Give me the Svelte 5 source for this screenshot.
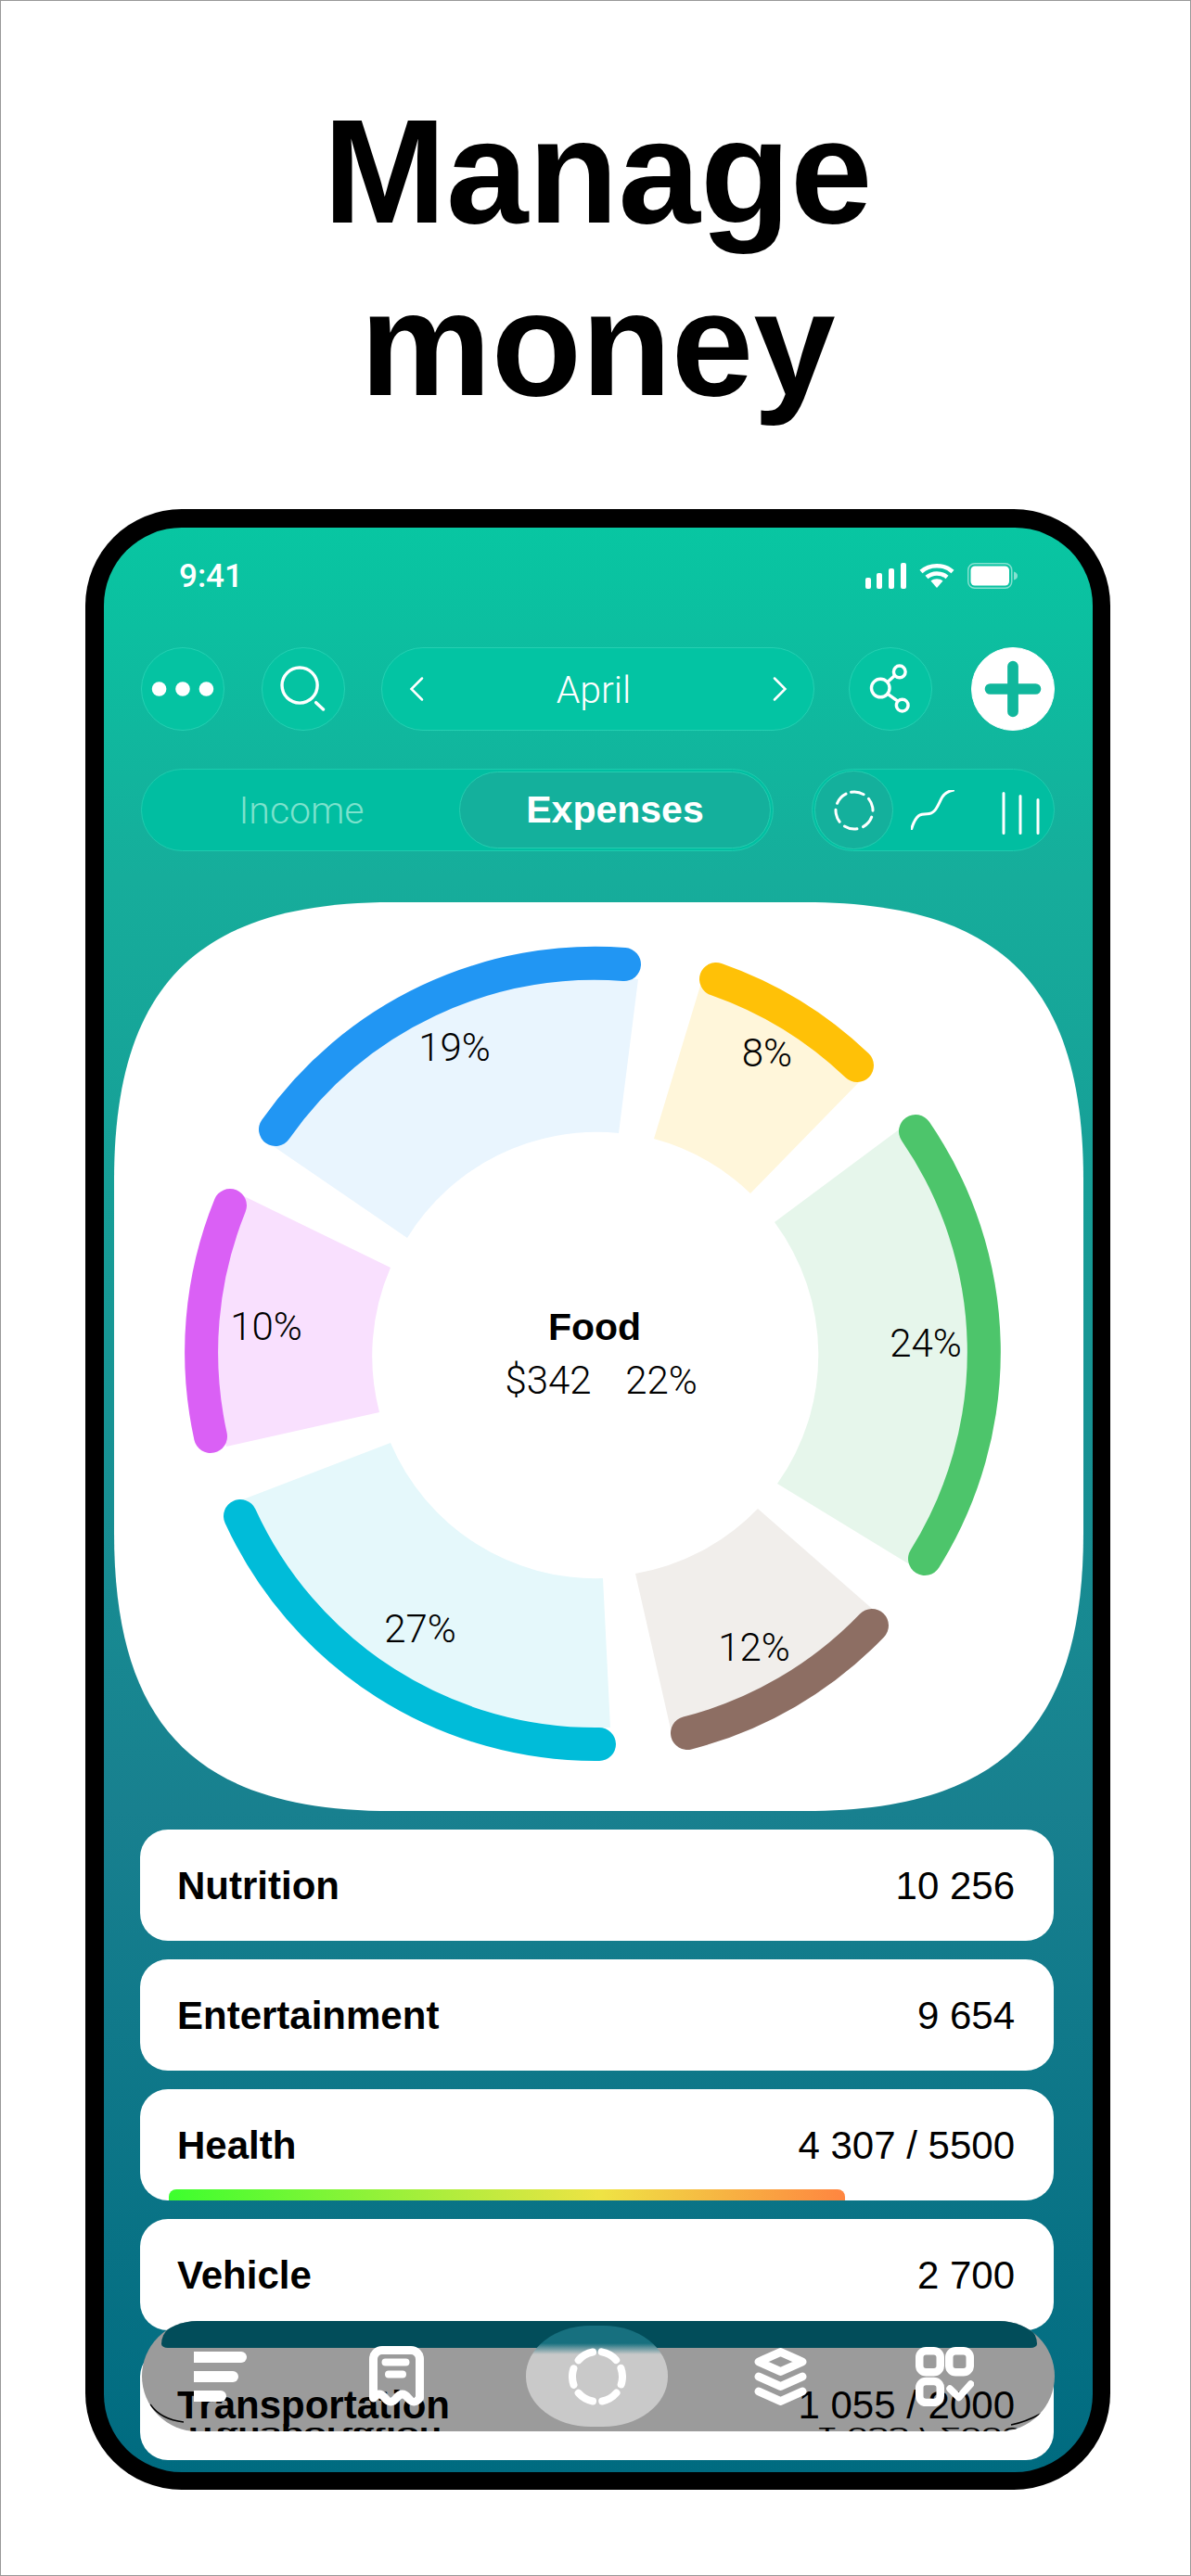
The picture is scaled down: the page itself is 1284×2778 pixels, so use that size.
<script lang="ts">
	const R = 421;
	const r = 240;
	// coordinates are page pixels, the svg viewBox is the card's box on the page
	const slices = [
		{ color: '#2196f3', tint: '#e9f5fe', arc: [297, 1217, 673, 1039], w: [293, 1234, 688, 1055, 667, 1221, 439, 1334], pct: '19%', tx: 490, ty: 1143 },
		{ color: '#ffc107', tint: '#fff6da', arc: [772, 1055, 924, 1148], w: [755, 1062, 928, 1164, 809, 1286, 705, 1227], pct: '8%', tx: 827, ty: 1149 },
		{ color: '#4dc56b', tint: '#e6f6eb', arc: [987, 1219, 997, 1680], w: [972, 1215, 982, 1687, 838, 1599, 835, 1317], pct: '24%', tx: 998, ty: 1462 },
		{ color: '#8d6e63', tint: '#f1eeeb', arc: [940, 1752, 741, 1868], w: [945, 1738, 724, 1868, 685, 1696, 817, 1626], pct: '12%', tx: 813, ty: 1790 },
		{ color: '#00bcd9', tint: '#e5f8fb', arc: [646, 1880, 259, 1634], w: [658, 1862, 262, 1616, 421, 1555, 650, 1701], pct: '27%', tx: 453, ty: 1770 },
		{ color: '#da60f5', tint: '#f9e0fe', arc: [227, 1548, 248, 1299], w: [244, 1559, 263, 1289, 421, 1366, 409, 1522], pct: '10%', tx: 287, ty: 1444 }
	];

	const arcPath = (a: number[]) => `M${a[0]} ${a[1]}A${R} ${R} 0 0 1 ${a[2]} ${a[3]}`;
	const wedgePath = (w: number[]) =>
		`M${w[0]} ${w[1]}A${R} ${R} 0 0 1 ${w[2]} ${w[3]}L${w[4]} ${w[5]}A${r} ${r} 0 0 0 ${w[6]} ${w[7]}Z`;

	const rows = [
		{ name: 'Nutrition', value: '10 256' },
		{ name: 'Entertainment', value: '9 654' },
		{ name: 'Health', value: '4 307 / 5500', progress: true },
		{ name: 'Vehicle', value: '2 700' },
		{ name: 'Transportation', value: '1 055 / 2000' }
	];
</script>

<div class="page">
	<h1>Manage<br />money</h1>

	<div class="phone">
		<div class="screen">
			<div class="status">
				<span class="time">9:41</span>
				<div class="status-icons">
					<svg width="44" height="28" viewBox="0 0 44 28" fill="#fff">
						<rect x="0" y="16" width="6" height="12" rx="2" />
						<rect x="12" y="11" width="6" height="17" rx="2" />
						<rect x="25" y="6" width="6" height="22" rx="2" />
						<rect x="38" y="0" width="6" height="28" rx="2" />
					</svg>
					<svg width="38" height="28" viewBox="0 0 38 28" fill="none" stroke="#fff" stroke-width="4.500">
						<path d="M2 9.500C11 1 27 1 36 9.500" />
						<path d="M8 15.500C14 10 24 10 30 15.500" />
						<path d="M19 27l-6.500-7.500c3.500-3 9.500-3 13 0z" fill="#fff" stroke="none" />
					</svg>
					<svg width="55" height="28" viewBox="0 0 55 28">
						<rect x=".75" y=".75" width="47" height="26.500" rx="7" fill="none" stroke="#fff" stroke-opacity=".5" stroke-width="1.500" />
						<rect x="3.500" y="3.500" width="41.500" height="21" rx="4.500" fill="#fff" />
						<path d="M50 9.500c3 1 4 2.500 4 4.500s-1 3.500-4 4.500z" fill="#fff" fill-opacity=".5" />
					</svg>
				</div>
			</div>

			<div class="toolbar">
				<button class="round" aria-label="More">
					<svg viewBox="0 0 90 90" fill="#fff">
						<circle cx="19" cy="45" r="8" />
						<circle cx="45" cy="45" r="8" />
						<circle cx="71" cy="45" r="8" />
					</svg>
				</button>
				<button class="round" aria-label="Search">
					<svg viewBox="0 0 90 90" fill="none" stroke="#fff" stroke-width="3.500" stroke-linecap="round">
						<circle cx="41" cy="41" r="19.500" />
						<path d="M59 60l8 7.500" />
					</svg>
				</button>
				<div class="month">
					<svg width="16" height="26" viewBox="0 0 16 26" fill="none" stroke="#fff" stroke-width="2.500" stroke-linecap="round">
						<path d="M14 1.500L2.500 13 14 24.500" />
					</svg>
					<span>April</span>
					<svg width="16" height="26" viewBox="0 0 16 26" fill="none" stroke="#fff" stroke-width="2.500" stroke-linecap="round">
						<path d="M2 1.500L13.500 13 2 24.500" />
					</svg>
				</div>
				<button class="round" aria-label="Share">
					<svg viewBox="0 0 90 90" fill="none" stroke="#fff" stroke-width="3.500">
						<circle cx="34" cy="44" r="10" />
						<circle cx="55" cy="26" r="6.500" />
						<circle cx="58" cy="63" r="6.500" />
						<path d="M41.500 37.500l8.500-7.500M42 50.500l11 8" />
					</svg>
				</button>
				<button class="round add" aria-label="Add">
					<svg viewBox="0 0 90 90" fill="none" stroke="#10b79c" stroke-width="12" stroke-linecap="round">
						<path d="M45 20v50M20 45h50" />
					</svg>
				</button>
			</div>

			<div class="controls">
				<div class="segment">
					<span class="seg-off">Income</span>
					<span class="seg-on">Expenses</span>
				</div>
				<div class="views">
					<span class="view-on">
						<svg width="44" height="44" viewBox="0 0 44 44" fill="none" stroke="#fff" stroke-width="3" stroke-linecap="round">
							<circle cx="22" cy="22" r="20" stroke-dasharray="14 7" transform="rotate(-100 22 22)" />
						</svg>
					</span>
					<svg class="curve" width="47" height="43" viewBox="0 0 47 43" fill="none" stroke="#fff" stroke-width="3" stroke-linecap="round">
						<path d="M.7 41.700C5.700 25.700 10.700 25.700 17.300 25.700 27.300 25.700 29 15.700 34 7.300 37.300 2.300 42.300.7 46 0" />
					</svg>
					<svg class="bars" width="42" height="46" viewBox="0 0 42 46" fill="none" stroke="#fff" stroke-width="3" stroke-linecap="round">
						<path d="M2 1.500V44.500M20 4.500V44.500M39 8.500V44.500" />
					</svg>
				</div>
			</div>

			<div class="card">
				<svg viewBox="122 972 1047 980" width="1047" height="980">
					<path
						d="M423 972H867C1080 972 1168 1062 1168 1272V1652C1168 1862 1080 1952 867 1952H423C213 1952 123 1862 123 1652V1272C123 1062 213 972 423 972Z"
						fill="#fff"
					/>
					{#each slices as s}
						<path d={wedgePath(s.w)} fill={s.tint} />
						<path d={arcPath(s.arc)} fill="none" stroke={s.color} stroke-width="36" stroke-linecap="round" />
						<text x={s.tx} y={s.ty} text-anchor="middle" class="pct">{s.pct}</text>
					{/each}
					<text x="641" y="1444" text-anchor="middle" class="food">Food</text>
					<text x="591" y="1502" text-anchor="middle" class="pct">$342</text>
					<text x="713" y="1502" text-anchor="middle" class="pct">22%</text>
				</svg>
			</div>

			<div class="list">
				{#each rows as row}
					<div class="row">
						<b>{row.name}</b>
						<span>{row.value}</span>
						{#if row.progress}
							<i class="progress"></i>
						{/if}
					</div>
				{/each}
			</div>

			<!-- glass tab bar: the backing sits under the row text, the icons above it -->
			<div class="tab-back" aria-hidden="true">
				<div class="band"></div>
				<span class="mirror mirror-left">Transportation</span>
				<span class="mirror mirror-right">1 055 / 2000</span>
				<svg viewBox="0 0 984 119" width="984" height="119" fill="none" stroke="#000" stroke-width="1.500">
					<path d="M9 90C16 100 28 107 45 109" />
					<path d="M969 100C958 106 948 110 937 112" />
				</svg>
			</div>
			<div class="tabs">
				<svg width="57" height="54" viewBox="0 0 57 54" fill="#fff">
					<path d="M0 0H51a6 6 0 0 1 0 12H0z" />
					<path d="M0 21H42a6 6 0 0 1 0 12H0z" />
					<path d="M0 42H29a6 6 0 0 1 0 12H0z" />
				</svg>
				<svg width="59" height="66" viewBox="0 0 59 66" fill="none" stroke="#fff" stroke-width="9" stroke-linejoin="round" stroke-linecap="round">
					<path d="M4.500 14a9.500 9.500 0 0 1 9.500-9.500h31a9.500 9.500 0 0 1 9.500 9.500V56q-6.250 8-12.500 0q-6.250-8-12.500 0q-6.250 8-12.500 0q-6.250-8-12.500 0z" />
					<path d="M17.500 17.500h22M21 30.500h15" stroke-width="8" />
				</svg>
				<div class="lens">
					<svg width="62" height="62" viewBox="0 0 62 62" fill="none" stroke="#fff" stroke-width="8" stroke-linecap="round">
						<circle cx="31" cy="31" r="27" stroke-dasharray="18 10.270" transform="rotate(-80 31 31)" />
					</svg>
				</div>
				<svg width="58" height="62" viewBox="0 0 58 62" fill="none" stroke="#fff" stroke-width="9" stroke-linejoin="round" stroke-linecap="round">
					<path d="M28.500 4.500L52 15 28.500 25.500 5 15z" />
					<path d="M5 31L28.500 41.500 52 31" />
					<path d="M5 47L28.500 57.500 52 47" />
				</svg>
				<svg width="63" height="64" viewBox="0 0 63 64" fill="none" stroke="#fff" stroke-width="8.500" stroke-linejoin="round" stroke-linecap="round">
					<rect x="4.250" y="4.250" width="22.500" height="23" rx="7" />
					<rect x="36.250" y="4.250" width="22.500" height="23" rx="7" />
					<rect x="4.250" y="37" width="22.500" height="23" rx="7" />
					<path d="M37 45L46.700 54.500 59.500 40" stroke-width="7.500" />
				</svg>
			</div>
		</div>
	</div>
</div>

<style>
	:global(body) {
		margin: 0;
		background: #fff;
	}

	.page {
		width: 1284px;
		height: 2778px;
		overflow: hidden;
		box-sizing: border-box;
		padding-top: 92px;
		font-family: 'Liberation Sans', Arial, sans-serif;
		color: #000;
		box-shadow: inset 0 0 0 1px #999;
	}

	h1 {
		margin: 0;
		height: 457px;
		padding-left: 5px;
		font-size: 159px;
		line-height: 186px;
		font-weight: 700;
		text-align: center;
	}

	.phone {
		box-sizing: border-box;
		width: 1105px;
		height: 2136px;
		margin-left: 92px;
		padding: 20px 19px 19px 20px;
		background: #000;
		border-radius: 104px;
	}

	.screen {
		position: relative;
		z-index: 0;
		height: 100%;
		overflow: hidden;
		display: flex;
		flex-direction: column;
		border-radius: 84px;
		background: linear-gradient(#08c6a2 0, #16ad9b 18%, #18808f 66%, #006b80 100%);
	}

	.status {
		display: flex;
		justify-content: space-between;
		align-items: center;
		height: 36px;
		margin-top: 34px;
		padding: 0 80px 0 81px;
		color: #fff;
	}

	.time {
		font-family: Roboto, sans-serif;
		font-weight: 500;
		font-size: 35px;
	}

	.status-icons {
		display: flex;
		align-items: center;
		gap: 14px;
	}

	.toolbar {
		display: flex;
		gap: 40px;
		margin: 59px 0 0 40px;
		height: 90px;
	}

	.round {
		display: block;
		flex: none;
		padding: 0;
		width: 90px;
		height: 90px;
		border-radius: 50%;
		background: #05c3a2;
		border: 1px solid #25d0b2;
		box-sizing: border-box;
	}

	.round svg {
		display: block;
		width: 88px;
		height: 88px;
	}

	.add {
		margin-left: 2px;
		background: #fff;
		border-color: #fff;
	}

	.month {
		display: flex;
		flex: none;
		align-items: center;
		justify-content: space-between;
		width: 467px;
		margin: 0 -3px 0 -1px;
		padding: 0 28px 0 29px;
		border-radius: 45px;
		background: #03c4a3;
		border: 1px solid #25d0b2;
		box-sizing: border-box;
		font-family: Roboto, sans-serif;
		font-weight: 300;
		font-size: 41px;
		color: #fff;
	}

	.month span {
		margin: 2px 10px 0 0;
	}

	.controls {
		display: flex;
		justify-content: space-between;
		height: 89px;
		margin: 41px 41px 0 40px;
	}

	.segment {
		box-sizing: border-box;
		display: flex;
		align-items: center;
		justify-content: space-between;
		width: 682px;
		padding: 2px;
		border-radius: 45px;
		background: #01bea1;
		border: 1px solid #1fcbae;
		font-size: 41px;
	}

	.seg-off {
		flex: 1;
		text-align: center;
		font-family: Roboto, sans-serif;
		font-weight: 300;
		color: #7de2cd;
	}

	.seg-on {
		box-sizing: border-box;
		width: 336px;
		height: 83px;
		line-height: 81px;
		text-align: center;
		border-radius: 42px;
		background: #14b09c;
		border: 1px solid #25cdb0;
		color: #fff;
		font-weight: 700;
	}

	.views {
		box-sizing: border-box;
		display: flex;
		align-items: center;
		width: 262px;
		padding-left: 2px;
		border-radius: 45px;
		background: #01bea1;
		border: 1px solid #1fcbae;
	}

	.view-on {
		box-sizing: border-box;
		display: flex;
		align-items: center;
		justify-content: center;
		width: 85px;
		height: 85px;
		border-radius: 50%;
		background: #14b09c;
		border: 1px solid #25cdb0;
	}

	.curve {
		margin-left: 19px;
	}

	.bars {
		margin-left: 51px;
		margin-top: 6px;
	}

	.card {
		margin: 55px 0 0 10px;
		height: 980px;
	}

	.card svg {
		display: block;
	}

	.pct {
		font-family: Roboto, sans-serif;
		font-weight: 300;
		font-size: 42px;
		fill: #000;
	}

	.food {
		font-size: 41px;
		font-weight: 700;
		fill: #000;
	}

	.list {
		display: flex;
		flex-direction: column;
		gap: 20px;
		margin: 20px 42px 0 39px;
	}

	.row {
		flex: none;
		position: relative;
		box-sizing: border-box;
		display: flex;
		align-items: center;
		justify-content: space-between;
		height: 120px;
		padding: 2px 42px 0 40px;
		border-radius: 30px;
		background: #fff;
		font-size: 42px;
	}

	.row b,
	.row span {
		position: relative;
		z-index: 2;
	}

	.progress {
		position: absolute;
		left: 31px;
		bottom: 0;
		width: 729px;
		height: 12px;
		border-radius: 8px 8px 0 0;
		background: linear-gradient(90deg, #3dff2e, #efe344 64%, #ff8540);
	}

	.tab-back,
	.tabs {
		position: absolute;
		left: 41px;
		top: 1934px;
		width: 984px;
		height: 119px;
		border-radius: 60px;
	}

	.tab-back {
		z-index: 1;
		overflow: hidden;
		background: #9b9b9b;
		font-size: 40px;
	}

	.tab-back svg {
		position: absolute;
		inset: 0;
	}

	.band {
		position: absolute;
		left: 21px;
		right: 19px;
		top: 0;
		height: 29px;
		background: #024d5a;
		border-radius: 34px 34px 8px 8px / 29px 29px 5px 5px;
	}

	.mirror {
		position: absolute;
		top: 99px;
		line-height: 46px;
		transform: scaleY(-0.5);
		white-space: nowrap;
	}

	.mirror-left {
		left: 43px;
		font-weight: 700;
	}

	.mirror-right {
		left: 727px;
	}

	.tabs {
		z-index: 3;
		display: grid;
		grid-template-columns: 189px 169px 246px 174px 63px;
		align-items: center;
		padding-left: 56px;
		box-sizing: border-box;
	}

	.tabs svg {
		display: block;
	}

	.lens {
		display: flex;
		align-items: center;
		justify-content: center;
		width: 153px;
		height: 109px;
		border-radius: 70px / 54px;
		background: linear-gradient(#17707f 0, #17707f 19px, #c9c9c9 31px);
	}
</style>
